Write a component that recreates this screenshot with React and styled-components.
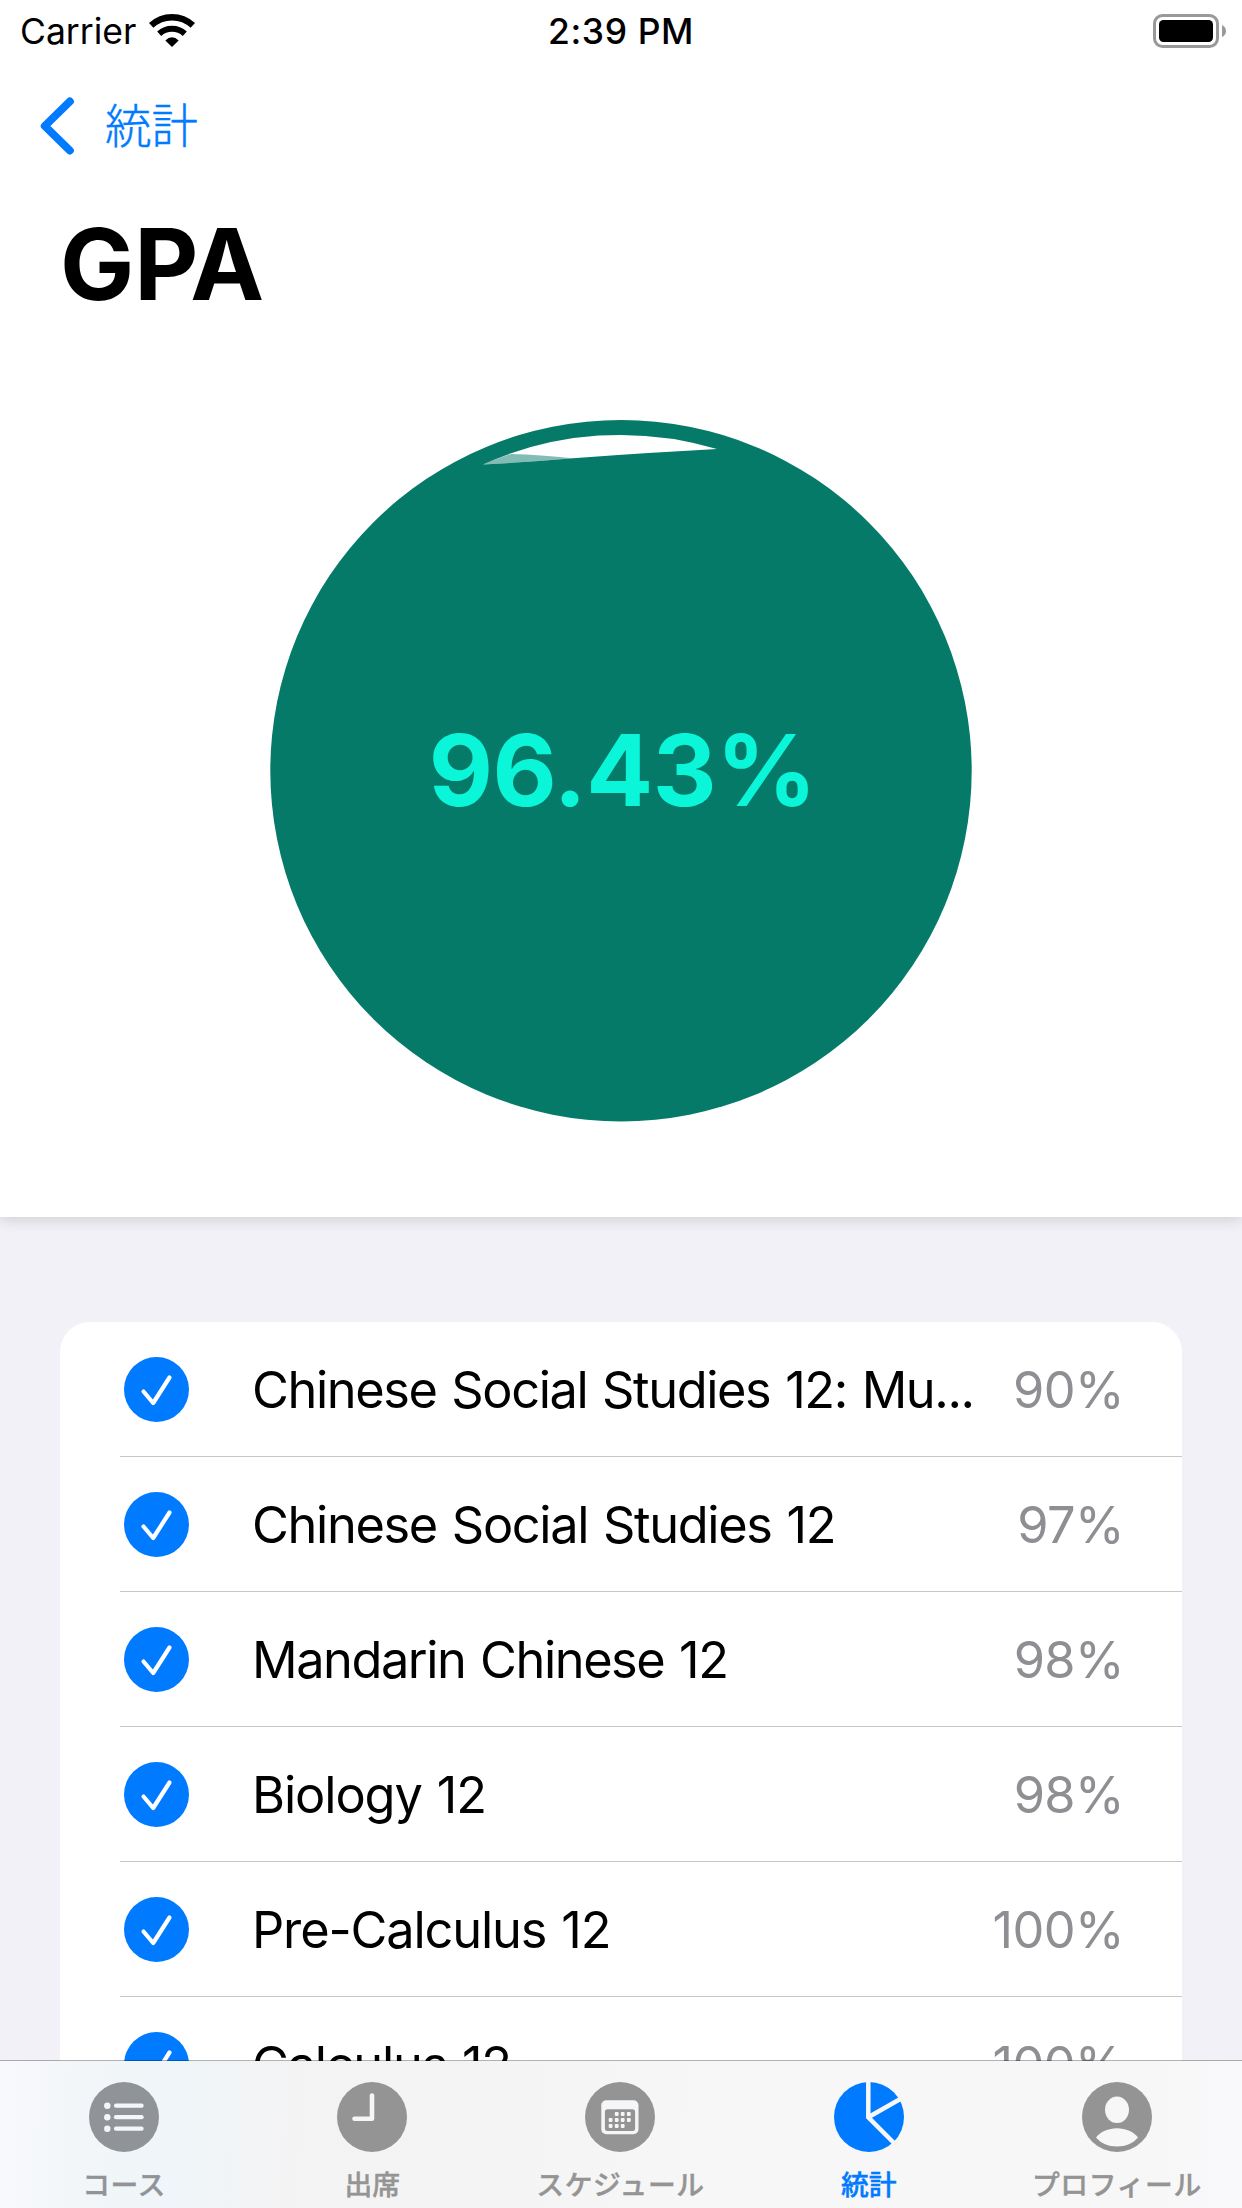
import React from "react";
import styled, { createGlobalStyle } from "styled-components";

const GlobalStyle = createGlobalStyle`
  *, *::before, *::after { box-sizing: border-box; }
  body {
    margin: 0;
    background: #fff;
    font-family: Inter, "Noto Sans CJK JP", sans-serif;
    font-kerning: normal;
  }
`;

const Screen = styled.div`
  display: flex;
  flex-direction: column;
  width: 1242px;
  height: 2208px;
  overflow: hidden;
  background: #f2f1f7;
`;

const Header = styled.header`
  flex: none;
  display: flex;
  flex-direction: column;
  height: 1217px;
  background: #fff;
  box-shadow: 0 2px 14px rgba(0, 0, 0, 0.16);
  z-index: 1;
`;

const StatusBar = styled.div`
  display: grid;
  grid-template-columns: 1fr auto 1fr;
  align-items: center;
  height: 60px;
  padding: 2px 15px 0;
  line-height: 1;
`;

const CarrierGroup = styled.div`
  display: flex;
  align-items: center;
  gap: 13px;
  padding-left: 5px;
`;

const Carrier = styled.span`
  padding-top: 2px;
  font-size: 35.5px;
  letter-spacing: 0;
`;

const Clock = styled.span`
  padding-top: 2px;
  font-size: 35.5px;
  font-weight: 500;
  letter-spacing: 0.6px;
`;

const BatteryIcon = styled.svg`
  justify-self: end;
`;

const WifiIcon = styled.svg`
  margin-top: -2px;
`;

const BackButton = styled.a`
  display: flex;
  align-items: center;
  gap: 31px;
  height: 132px;
  padding: 0 0 0 40px;
  color: #007aff;
`;

const BackLabel = styled.span`
  font-size: 46.5px;
  line-height: 1;
  font-weight: 300;
  -webkit-text-stroke: 0.4px currentColor;
`;

const Title = styled.h1`
  margin: 0;
  padding: 12px 0 0 60px;
  height: 148px;
  font-size: 99px;
  line-height: 120px;
  font-weight: 700;
  letter-spacing: 0;
`;

const Gauge = styled.div`
  display: grid;
  place-items: center;
  width: 702px;
  height: 702px;
  margin: 80px auto 0;
  & > * { grid-area: 1 / 1; }
`;

const GaugeValue = styled.span`
  z-index: 1;
  color: #0bf6d9;
  font-size: 99px;
  line-height: 1;
  font-weight: 700;
  letter-spacing: -0.4px;
  padding: 0 0 2px 3px;
`;

const ListArea = styled.main`
  flex: 1;
  min-height: 0;
  overflow: hidden;
  padding: 105px 60px 0;
`;

const Card = styled.ul`
  margin: 0;
  padding: 0 0 0 60px;
  list-style: none;
  background: #fff;
  border-radius: 30px 30px 0 0;
`;

const Row = styled.li`
  display: flex;
  align-items: center;
  height: 135px;
  padding: 0 58px 0 4px;
  border-bottom: 1px solid #c6c6c8;
  font-size: 50.5px;
  line-height: 1.2;
`;

const CourseName = styled.span`
  flex: 1;
  min-width: 0;
  margin: 0 28px 0 63px;
  padding-top: 3px;
  white-space: nowrap;
  word-spacing: 2px;
  letter-spacing: ${(p) => p.$tracking}px;
`;

const Score = styled.span`
  padding-top: 3px;
  color: #8e8e93;
  letter-spacing: -0.6px;
`;

const TabBar = styled.nav`
  flex: none;
  z-index: 2;
  display: grid;
  grid-template-columns: repeat(5, 1fr);
  height: 148px;
  margin-top: -1px;
  padding-right: 1px;
  border-top: 1px solid rgba(0, 0, 0, 0.3);
  background: linear-gradient(92deg, #f8f9fc 0, #f2f6f9 90px, #eff5f8 180px, #f3f3f4 290px, #f4f4f4 480px, #f7f7f7 720px, #f7f7f7 1150px, #f9f9fc 1242px) padding-box;
`;

const Tab = styled.a`
  display: flex;
  flex-direction: column;
  align-items: center;
  gap: 15px;
  padding-top: 21px;
  color: ${(p) => (p.$active ? "#007aff" : p.$tinted ? "#909498" : "#949494")};
`;

const TabLabel = styled.span`
  font-size: 27.8px;
  line-height: 36px;
  font-weight: 500;
  letter-spacing: ${(p) => (p.$wide ? "0.6px" : "0")};
  white-space: nowrap;
  -webkit-text-stroke: 0.4px currentColor;
`;

const CheckCircle = () => (
  <svg width="65" height="65" viewBox="0 0 65 65">
    <circle cx="32.5" cy="32.5" r="32.5" fill="#007aff" />
    <path d="M19.5 34.5 29.2 46 45.5 20.5" fill="none" stroke="#fff" strokeWidth="4.2" strokeLinecap="round" strokeLinejoin="round" />
  </svg>
);

const glyph = "#f5f6f7";

const CoursesIcon = () => (
  <svg width="70" height="70" viewBox="0 0 70 70">
    <circle cx="35" cy="35" r="35" fill="currentColor" />
    {[23.7, 35.2, 46.7].map((y) => (
      <g key={y} fill={glyph} stroke={glyph}>
        <circle cx="18.3" cy={y} r="3.2" strokeWidth="0" />
        <path d={`M27 ${y}H52.6`} strokeWidth="4.2" strokeLinecap="round" />
      </g>
    ))}
  </svg>
);

const ClockIcon = () => (
  <svg width="70" height="70" viewBox="0 0 70 70">
    <circle cx="35" cy="35" r="35" fill="currentColor" />
    <path d="M35 13.5V36.7H17.5" fill="none" stroke={glyph} strokeWidth="4.6" strokeLinecap="round" strokeLinejoin="round" />
  </svg>
);

const dots = [
  [31.7, 32], [37.7, 32], [43.8, 32],
  [25.6, 38], [31.7, 38], [37.7, 38], [43.8, 38],
  [25.6, 44], [31.7, 44], [37.7, 44],
];

const CalendarIcon = () => (
  <svg width="70" height="70" viewBox="0 0 70 70">
    <circle cx="35" cy="35" r="35" fill="currentColor" />
    <rect x="16.3" y="18.3" width="37.2" height="34" rx="5" fill={glyph} />
    <rect x="19.9" y="27.2" width="30.2" height="21.7" rx="2.5" fill="currentColor" />
    {dots.map(([x, y]) => (
      <rect key={`${x}-${y}`} x={x - 1.9} y={y - 1.9} width="3.8" height="3.8" rx="0.8" fill={glyph} />
    ))}
  </svg>
);

const PieIcon = () => (
  <svg width="70" height="70" viewBox="0 0 70 70">
    <circle cx="35" cy="35" r="35" fill="currentColor" />
    <path d="M34.3 -2V35.3L61 62M34.3 35.3 69 15.5" fill="none" stroke="#f7f7f7" strokeWidth="4.5" />
  </svg>
);

const ProfileIcon = () => (
  <svg width="70" height="70" viewBox="0 0 70 70">
    <circle cx="35" cy="35" r="35" fill="currentColor" />
    <ellipse cx="35" cy="27.8" rx="12" ry="13.2" fill="#f7f7f7" />
    <path d="M14 55.5C18 50 26.5 46.3 35 46.3S52 50 56 55.5C51 61.5 43.500 64.500 35 64.500S19 61.500 14 55.500Z" fill="#f7f7f7" />
  </svg>
);

const courses = [
  { name: "Chinese Social Studies 12: Mu...", score: "90%", tracking: -1.4 },
  { name: "Chinese Social Studies 12", score: "97%", tracking: -1.34 },
  { name: "Mandarin Chinese 12", score: "98%", tracking: -1.45 },
  { name: "Biology 12", score: "98%", tracking: -1.1 },
  { name: "Pre-Calculus 12", score: "100%", tracking: -1.15 },
  { name: "Calculus 12", score: "100%", tracking: -1.25 },
];

const tabs = [
  { label: "コース", Icon: CoursesIcon, tinted: true, wide: true },
  { label: "出席", Icon: ClockIcon },
  { label: "スケジュール", Icon: CalendarIcon, wide: true },
  { label: "統計", Icon: PieIcon, active: true },
  { label: "プロフィール", Icon: ProfileIcon, wide: true },
];

export default function App() {
  return (
    <Screen>
      <GlobalStyle />
      <Header>
        <StatusBar>
          <CarrierGroup>
            <Carrier>Carrier</Carrier>
            <WifiIcon width="46" height="33" viewBox="0 0 46 33">
              <path d="M2.200 11.400A30.500 30.500 0 0 1 43.800 11.400" fill="none" stroke="#000" strokeWidth="6.400" />
              <path d="M10.200 19.800A19 19 0 0 1 35.800 19.800" fill="none" stroke="#000" strokeWidth="6" />
              <path d="M16.300 26.500Q23 20.200 29.700 26.500L23 33Z" />
            </WifiIcon>
          </CarrierGroup>
          <Clock>2:39 PM</Clock>
          <BatteryIcon width="74" height="34" viewBox="0 0 74 34">
            <rect x="1.500" y="1.500" width="63" height="31" rx="8" fill="none" stroke="#999" strokeWidth="3" />
            <rect x="6" y="6" width="54" height="22" rx="4.500" />
            <path d="M69 11Q73 13 73 17T69 23Z" fill="#999" />
          </BatteryIcon>
        </StatusBar>
        <BackButton>
          <svg width="34" height="58" viewBox="0 0 34 58">
            <path d="M29.800 4.500 4.800 29 29.800 53.500" fill="none" stroke="#007aff" strokeWidth="8" strokeLinecap="round" strokeLinejoin="round" />
          </svg>
          <BackLabel>統計</BackLabel>
        </BackButton>
        <Title>GPA</Title>
        <Gauge>
          <svg width="702" height="702" viewBox="0 0 702 702">
            <circle cx="351" cy="350.700" r="350.700" fill="#057a69" />
            <path d="M213 44.400A336 336 0 0 1 447 29Q380 32.500 303 38.200Q260 42 213 44.400Z" fill="#fff" />
            <path d="M213 44.400Q226 38.700 241 33.900Q270 34.500 303 38.200Q260 42 213 44.400Z" fill="#057a69" opacity="0.5" />
          </svg>
          <GaugeValue>96.43%</GaugeValue>
        </Gauge>
      </Header>
      <ListArea>
        <Card>
          {courses.map((c) => (
            <Row key={c.name}>
              <CheckCircle />
              <CourseName $tracking={c.tracking}>{c.name}</CourseName>
              <Score>{c.score}</Score>
            </Row>
          ))}
        </Card>
      </ListArea>
      <TabBar>
        {tabs.map(({ label, Icon, active, tinted, wide }) => (
          <Tab key={label} $active={active} $tinted={tinted}>
            <Icon />
            <TabLabel $wide={wide}>{label}</TabLabel>
          </Tab>
        ))}
      </TabBar>
    </Screen>
  );
}
